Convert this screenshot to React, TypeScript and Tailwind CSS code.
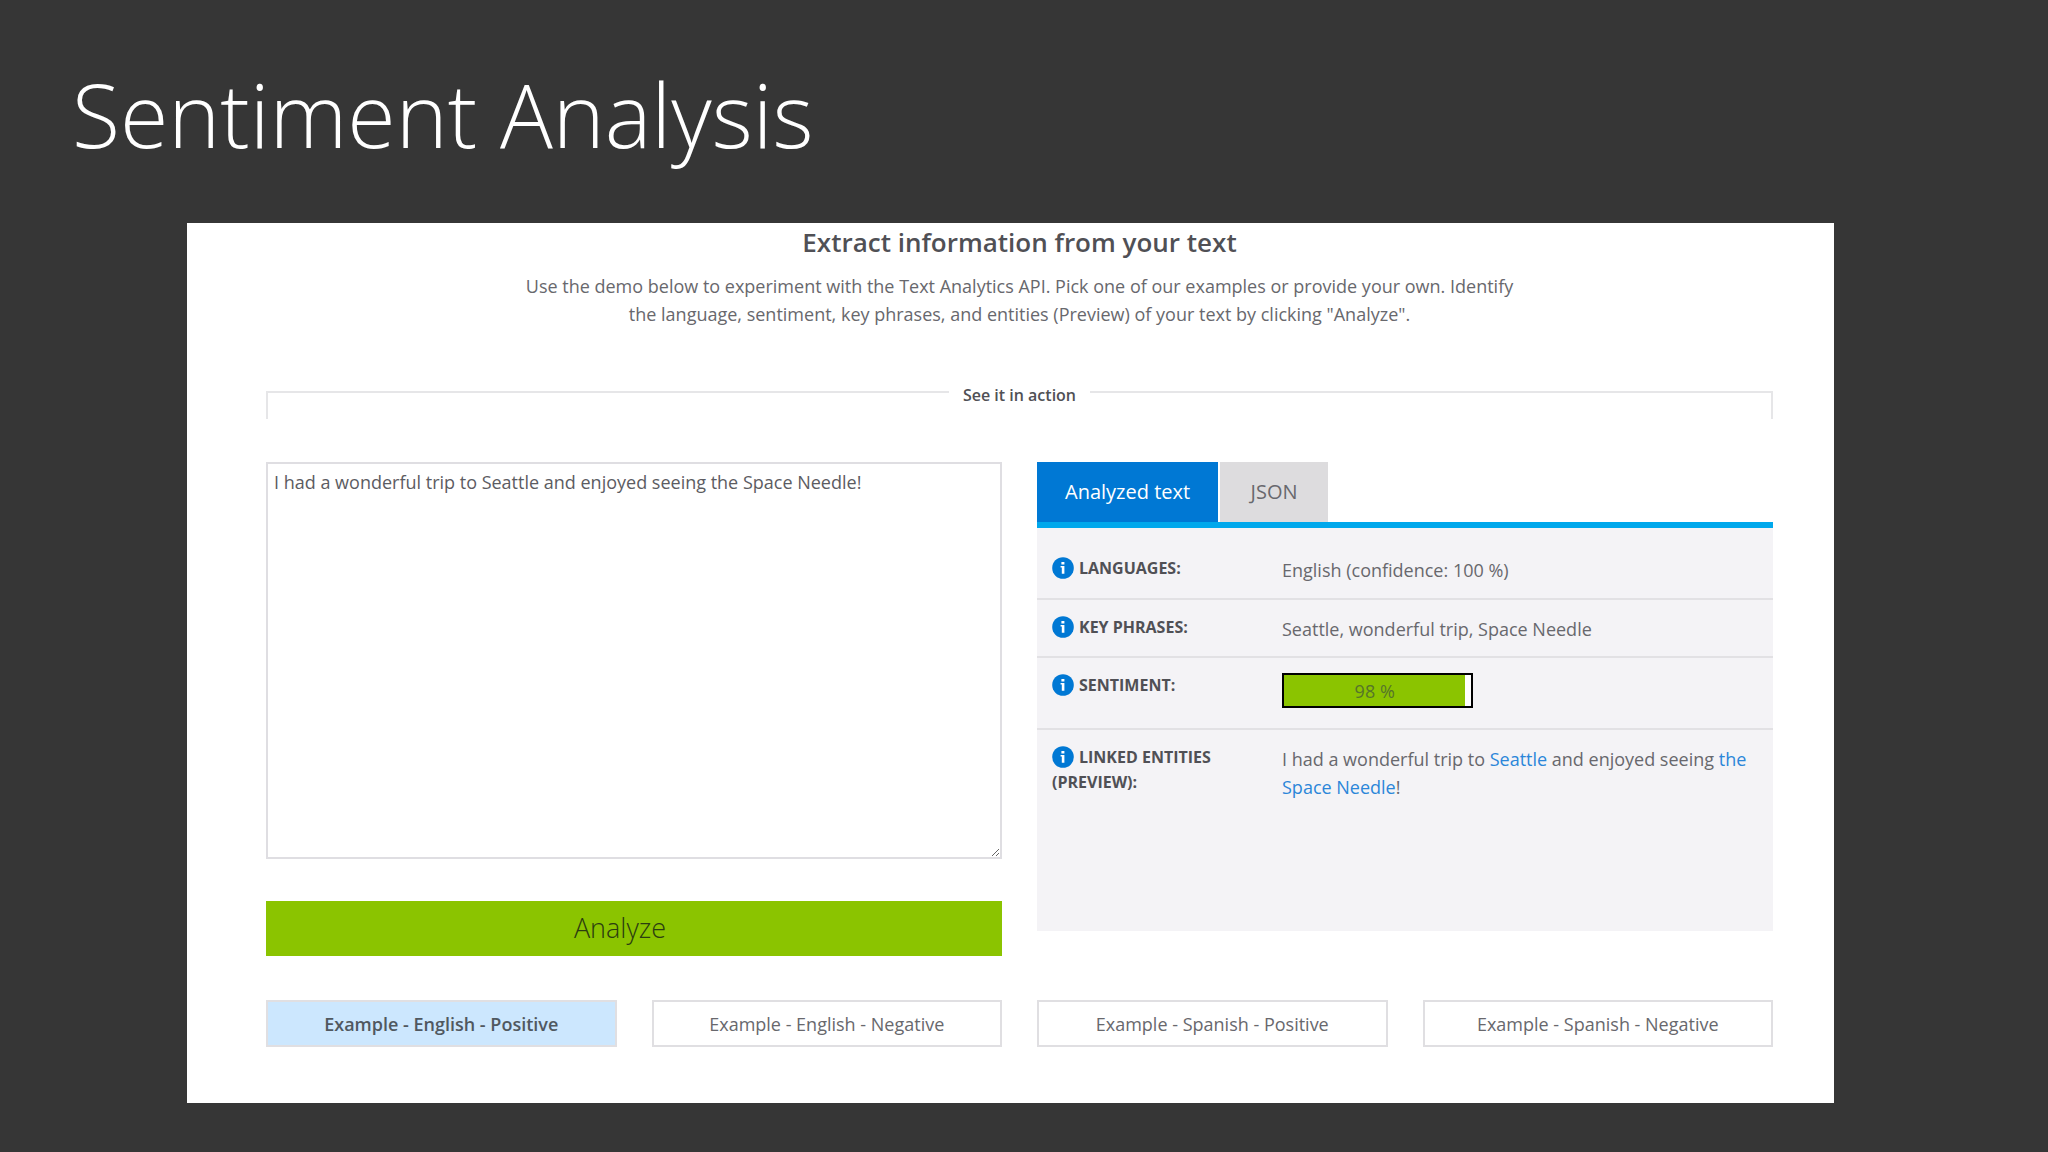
import { useState } from "react";
import type { ReactNode } from "react";

const SAMPLE = "I had a wonderful trip to Seattle and enjoyed seeing the Space Needle!";

const EXAMPLES = [
  "Example - English - Positive",
  "Example - English - Negative",
  "Example - Spanish - Positive",
  "Example - Spanish - Negative",
];

function InfoIcon() {
  return (
    <svg
      viewBox="0 0 22 22"
      className="mr-[5px] -mt-1 inline-block size-[22px] align-middle"
      aria-hidden="true"
    >
      <circle cx="11" cy="11" r="10.8" fill="#0078d4" />
      <path d="M9.4 5h3v2.4h-3zM8.6 9h3.8v7.8h-2.6v-6.2H8.6z" fill="#fff" />
    </svg>
  );
}

function Row({
  label,
  height,
  last,
  children,
}: {
  label: string;
  height: string;
  last?: boolean;
  children: ReactNode;
}) {
  return (
    <tr className={`align-top ${height} ${last ? "" : "border-b-2 border-[#e2e1e4]"}`}>
      <th
        scope="row"
        className="w-[245px] pt-[15px] pr-14 pl-[15px] text-left text-base leading-[25px] font-bold text-[#505055] uppercase"
      >
        <InfoIcon />
        {label}
      </th>
      <td className="pt-[15px] pr-5 text-lg leading-7 text-[#68686d]">{children}</td>
    </tr>
  );
}

export default function App() {
  const [tab, setTab] = useState(0);
  const [example, setExample] = useState(0);
  const score = 98;

  return (
    <div className="min-h-screen bg-[#363636] pb-12 font-['Open_Sans','Noto_Sans',sans-serif] text-[#68686d]">
      <h1 className="px-[72px] pt-[46px] pb-[41px] text-[88px] leading-[136px] font-light text-white">
        Sentiment Analysis
      </h1>
      <main className="mr-[214px] ml-[187px] bg-white px-[61px] pb-14 pl-[79px]">
        <header className="pt-px text-center">
          <h2 className="text-[26px] leading-9 font-semibold text-[#505055]">
            Extract information from your text
          </h2>
          <p className="mx-auto mt-3 max-w-[1000px] text-lg leading-7">
            Use the demo below to experiment with the Text Analytics API. Pick one of our examples
            or provide your own. Identify the language, sentiment, key phrases, and entities
            (Preview) of your text by clicking "Analyze".
          </p>
        </header>

        <div className="mt-[63px] flex h-7">
          <span className="flex-1 border-t-2 border-l-2 border-[#e6e6e8]" />
          <h3 className="-mt-2 px-3.5 text-base leading-6 font-semibold text-[#505055]">
            See it in action
          </h3>
          <span className="flex-1 border-t-2 border-r-2 border-[#e6e6e8]" />
        </div>

        <div className="mt-[43px] grid grid-cols-2 gap-[35px]">
          <form onSubmit={(e) => e.preventDefault()}>
            <textarea
              aria-label="Text to analyze"
              defaultValue={SAMPLE}
              className="block h-[397px] w-full border-2 border-[#dfdee2] bg-white px-1.5 py-1 text-lg leading-7 text-[#5c5c62]"
            />
            <button
              type="submit"
              className="mt-[42px] block h-[55px] w-full bg-[#8bc400] pr-7 text-[27px] font-light text-[#2c3d10]"
            >
              Analyze
            </button>
          </form>

          <section className="flex h-[469px] flex-col">
            <div role="tablist" className="flex h-[66px] gap-0.5 border-b-[6px] border-[#00a8ec] text-xl">
              <button
                type="button"
                role="tab"
                aria-selected={tab === 0}
                onClick={() => setTab(0)}
                className={`px-7 ${tab === 0 ? "bg-[#0078d4] text-white" : "bg-[#dddcde]"}`}
              >
                Analyzed text
              </button>
              <button
                type="button"
                role="tab"
                aria-selected={tab === 1}
                onClick={() => setTab(1)}
                className={`min-w-[108px] px-7 ${tab === 1 ? "bg-[#0078d4] text-white" : "bg-[#dddcde]"}`}
              >
                JSON
              </button>
            </div>
            <div role="tabpanel" className="flex-1 bg-[#f4f3f6] pt-[13px]">
              <table className="w-full border-collapse">
                <tbody>
                  <Row label="Languages:" height="h-[58px]">
                    English (confidence: 100 %)
                  </Row>
                  <Row label="Key phrases:" height="h-[58px]">
                    Seattle, wonderful trip, Space Needle
                  </Row>
                  <Row label="Sentiment:" height="h-[72px]">
                    <div
                      role="progressbar"
                      aria-valuenow={score}
                      aria-label="Sentiment score"
                      className="h-[35px] w-[191px] border-2 border-black bg-white"
                    >
                      <div
                        className="h-full bg-[#8bc400] text-center leading-8 text-[#56752a]"
                        style={{ width: `${score - 1}%` }}
                      >
                        {score} %
                      </div>
                    </div>
                  </Row>
                  <Row label="Linked entities (preview):" height="h-[84px]" last>
                    I had a wonderful trip to{" "}
                    <a href="#seattle" className="text-[#2b86d9]">
                      Seattle
                    </a>{" "}
                    and enjoyed seeing{" "}
                    <a href="#space-needle" className="text-[#2b86d9]">
                      the Space Needle
                    </a>
                    !
                  </Row>
                </tbody>
              </table>
            </div>
          </section>
        </div>

        <div className="mt-11 grid grid-cols-4 gap-[35px]">
          {EXAMPLES.map((name, i) => (
            <button
              key={name}
              type="button"
              aria-pressed={i === example}
              onClick={() => setExample(i)}
              className={`h-[47px] border-2 border-[#e0dfe2] text-lg ${
                i === example ? "bg-[#cce7fe] font-semibold text-[#505860]" : "bg-white"
              }`}
            >
              {name}
            </button>
          ))}
        </div>
      </main>
    </div>
  );
}
